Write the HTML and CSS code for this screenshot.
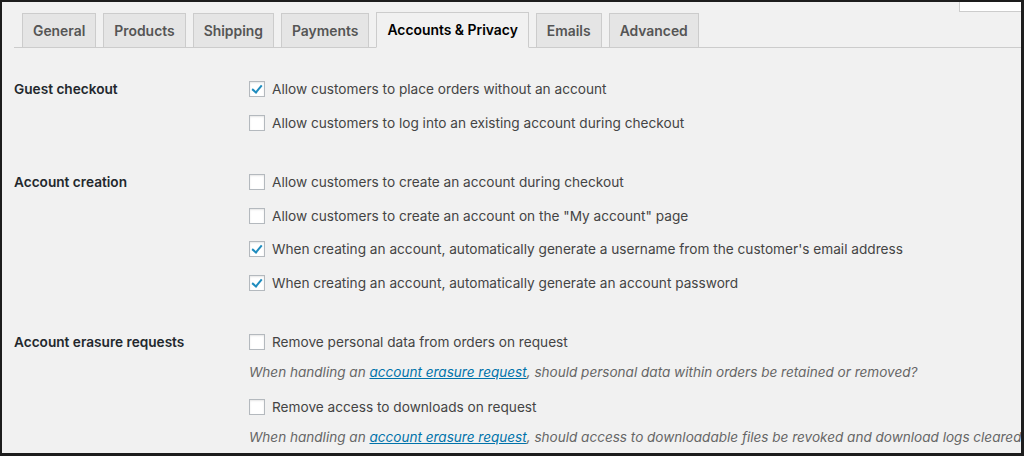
FILE: index.html
```html
<!DOCTYPE html>
<html>
<head>
<meta charset="utf-8">
<link rel="stylesheet" href="styles.css">
</head>
<body>
<div class="frame">
  <div class="search"></div>
  <nav class="tabs">
    <span class="tab">General</span>
    <span class="tab">Products</span>
    <span class="tab">Shipping</span>
    <span class="tab">Payments</span>
    <span class="tab active">Accounts &amp; Privacy</span>
    <span class="tab">Emails</span>
    <span class="tab">Advanced</span>
  </nav>
  <div class="form">
    <section class="group g1">
      <div class="label">Guest checkout</div>
      <div class="fields">
        <label class="opt"><span class="cb on"></span>Allow customers to place orders without an account</label>
        <label class="opt"><span class="cb"></span>Allow customers to log into an existing account during checkout</label>
      </div>
    </section>
    <section class="group g2">
      <div class="label">Account creation</div>
      <div class="fields">
        <label class="opt"><span class="cb"></span>Allow customers to create an account during checkout</label>
        <label class="opt"><span class="cb"></span>Allow customers to create an account on the "My account" page</label>
        <label class="opt"><span class="cb on"></span>When creating an account, automatically generate a username from the customer's email address</label>
        <label class="opt"><span class="cb on"></span>When creating an account, automatically generate an account password</label>
      </div>
    </section>
    <section class="group g3">
      <div class="label">Account erasure requests</div>
      <div class="fields">
        <label class="opt"><span class="cb"></span>Remove personal data from orders on request</label>
        <p class="desc">When handling an <a href="#">account erasure request</a>, should personal data within orders be retained or removed?</p>
        <label class="opt"><span class="cb"></span>Remove access to downloads on request</label>
        <p class="desc">When handling an <a href="#">account erasure request</a>, should access to downloadable files be revoked and download logs cleared?</p>
      </div>
    </section>
  </div>
</div>
</body>
</html>
```

FILE: styles.css
```css
html, body {
  margin: 0;
  padding: 0;
  background: #1d1d1d;
}
.frame {
  position: relative;
  box-sizing: border-box;
  width: 1024px;
  height: 456px;
  border-style: solid;
  border-color: #1d1d1d;
  border-width: 2px 3px 3px 2px;
  background: #f1f1f1;
  overflow: hidden;
  font-family: Inter, "Liberation Sans", Arial, sans-serif;
  font-size: 13.65px;
  color: #444;
}
.search {
  position: absolute;
  top: 0;
  right: 0;
  width: 61px;
  height: 9px;
  background: #fff;
  border-left: 1px solid #ccc;
  border-bottom: 1px solid #ccc;
}
.tabs {
  display: flex;
  align-items: flex-end;
  gap: 7px;
  margin: 10px 0 0 12px;
  padding-left: 8px;
  height: 35px;
  border-bottom: 1px solid #ccc;
}
.tab {
  box-sizing: border-box;
  height: 35px;
  margin-bottom: -1px;
  padding: 0 10px;
  display: flex;
  align-items: center;
  background: #e5e5e5;
  border: 1px solid #ccc;
  font-weight: 600;
  font-size: 13.9px;
  color: #555;
}
.tab.active {
  background: #f1f1f1;
  border-bottom-color: #f1f1f1;
  color: #000;
  height: 36px;
}
.form {
  margin-left: 12px;
  padding-top: 24px;
  display: flex;
  flex-direction: column;
}
.group {
  display: grid;
  grid-template-columns: 235px 1fr;
}
.g2 { margin-top: 25px; }
.g3 { margin-top: 25px; }
.label {
  height: 34px;
  display: flex;
  align-items: center;
  font-weight: 600;
  color: #23282d;
}
.fields {
  display: flex;
  flex-direction: column;
}
.opt {
  height: 34px;
  display: flex;
  align-items: center;
  white-space: nowrap;
}
.g2 .opt { height: 33.7px; }
.cb {
  box-sizing: border-box;
  width: 16px;
  height: 16px;
  margin-right: 7px;
  flex: none;
  background: #fff;
  border: 1px solid #b4b9be;
  box-shadow: inset 0 1px 2px rgba(0,0,0,0.1);
  position: relative;
}
.cb.on::after {
  content: "";
  position: absolute;
  left: 4px;
  top: 1px;
  width: 4px;
  height: 8px;
  border-right: 2.5px solid #1e8cbe;
  border-bottom: 2.5px solid #1e8cbe;
  transform: rotate(40deg);
}
.desc {
  margin: 0 0 5px;
  height: 26px;
  line-height: 26px;
  white-space: nowrap;
  font-style: italic;
  font-size: 13.55px;
  color: #666;
}
.desc a {
  color: #0073aa;
  text-decoration: underline;
}
```
